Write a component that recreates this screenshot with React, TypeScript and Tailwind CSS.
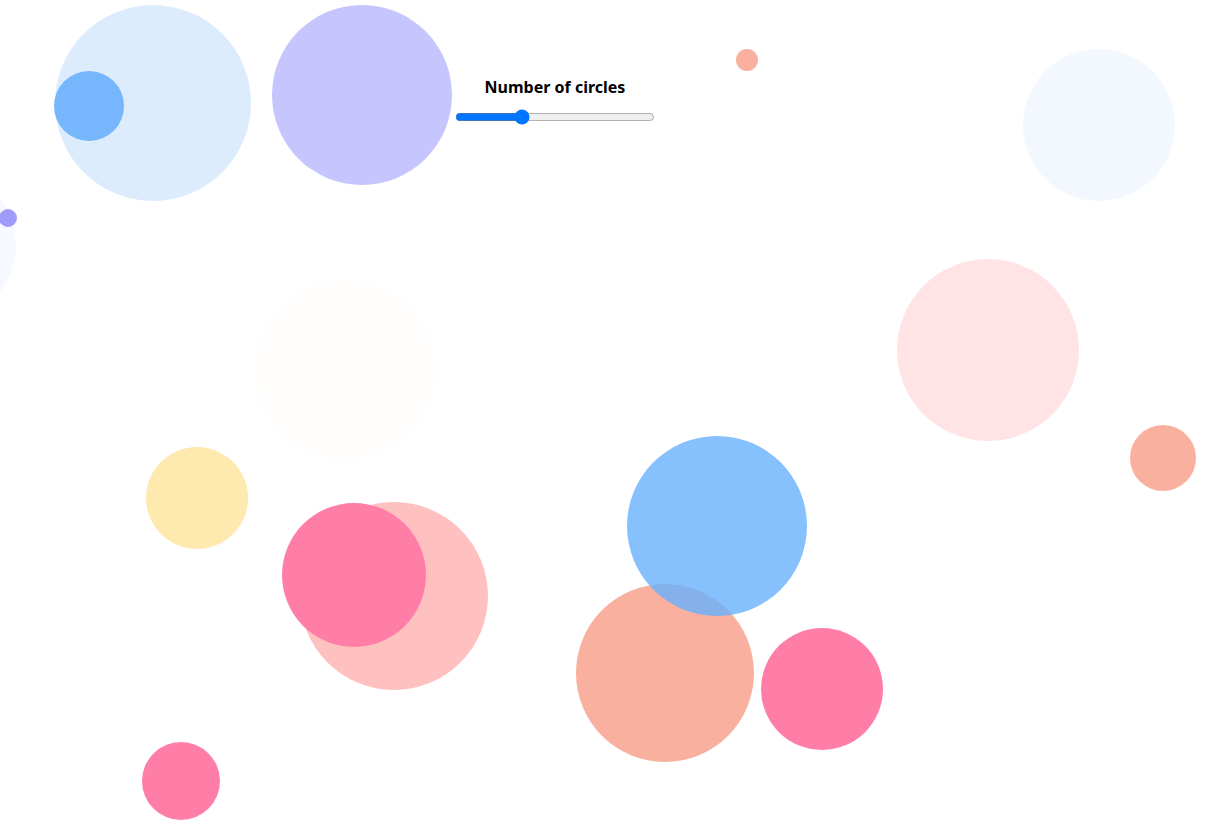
import { useState } from "react";

type Circle = { x: number; y: number; r: number; color: string };

// center x/y and radius in px, drawn in list order
const circles: Circle[] = [
  { x: -60, y: 245, r: 76, color: "rgba(244,248,255,0.8)" },
  { x: 345, y: 370, r: 90, color: "#fffefc" },
  { x: 153, y: 103, r: 98, color: "rgba(211,231,252,0.8)" },
  { x: 89, y: 106, r: 35, color: "#75b6fd" },
  { x: 362, y: 95, r: 90, color: "rgba(185,183,252,0.8)" },
  { x: 747, y: 60, r: 11, color: "rgba(248,156,134,0.8)" },
  { x: 1099, y: 125, r: 76, color: "rgba(240,246,254,0.8)" },
  { x: 8, y: 218, r: 9, color: "rgba(136,131,250,0.8)" },
  { x: 988, y: 350, r: 91, color: "rgba(255,220,223,0.8)" },
  { x: 1163, y: 458, r: 33, color: "rgba(248,156,134,0.8)" },
  { x: 197, y: 498, r: 51, color: "rgba(254,229,155,0.8)" },
  { x: 394, y: 596, r: 94, color: "rgba(255,176,176,0.8)" },
  { x: 354, y: 575, r: 72, color: "#ff7ea8" },
  { x: 665, y: 673, r: 89, color: "rgba(248,156,134,0.8)" },
  { x: 717, y: 526, r: 90, color: "rgba(104,178,252,0.8)" },
  { x: 822, y: 689, r: 61, color: "#ff7ea8" },
  { x: 181, y: 781, r: 39, color: "#ff7ea8" },
];

export default function App() {
  const [count, setCount] = useState(20);

  return (
    <div className="relative h-[824px] w-full overflow-hidden bg-white font-['Noto_Sans',sans-serif]">
      {circles.map((c, i) => (
        <div
          key={i}
          className="absolute rounded-full"
          style={{
            left: c.x - c.r,
            top: c.y - c.r,
            width: c.r * 2,
            height: c.r * 2,
            background: c.color,
          }}
        />
      ))}
      <div className="absolute left-[455px] top-[76px] flex w-[200px] flex-col items-center gap-[11px]">
        <label htmlFor="count" className="text-base font-bold leading-[22px] text-black">
          Number of circles
        </label>
        <input
          id="count"
          type="range"
          min={1}
          max={60}
          value={count}
          onChange={(e) => setCount(Number(e.target.value))}
          className="m-0 w-[200px]"
        />
      </div>
    </div>
  );
}
